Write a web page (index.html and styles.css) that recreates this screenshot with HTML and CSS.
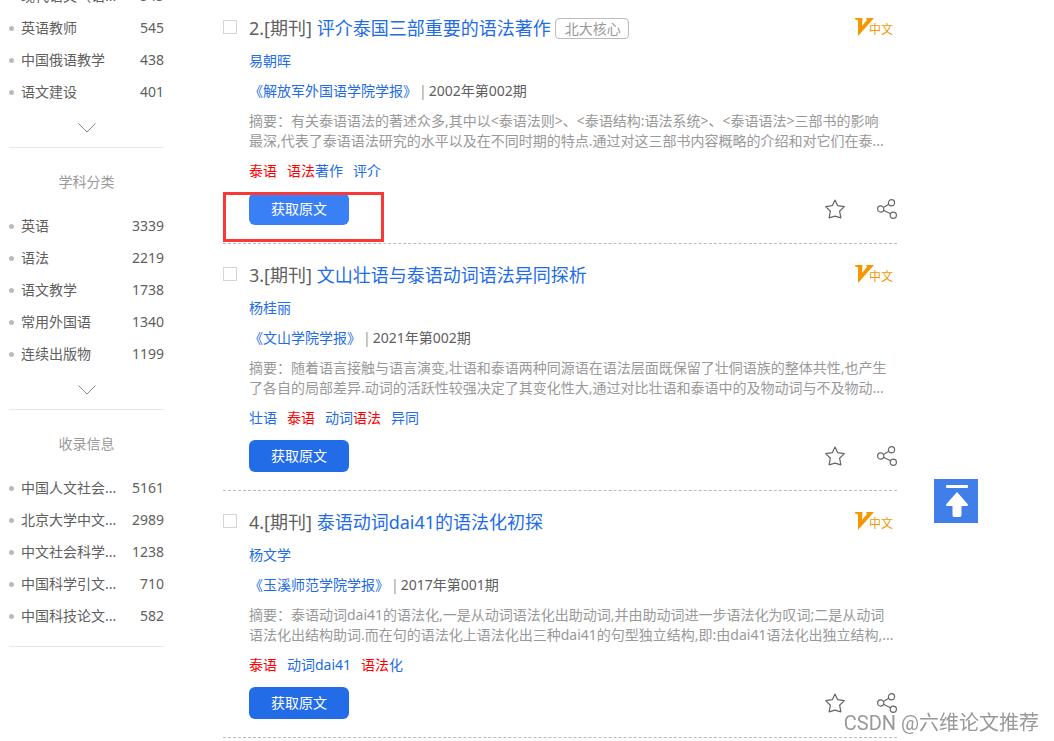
FILE: index.html
```html
<!DOCTYPE html>
<html lang="zh-CN">
<head>
    <meta charset="UTF-8">
    <title>文献检索结果</title>
    <link rel="stylesheet" href="styles.css">
</head>
<body>
<svg class="sprite" aria-hidden="true">
    <symbol id="down" viewBox="0 0 18 10"><path d="M.5.5 9 9 17.5.5"/></symbol>
    <symbol id="star" viewBox="0 0 20 20"><path d="M10 1 12.7 6.7 19.3 7.6 14.6 12.2 15.9 18.9 10 17.1 4.1 18.9 5.4 12.2.7 7.6 7.3 6.7Z"/></symbol>
    <symbol id="share" viewBox="0 0 20 20"><circle cx="3.7" cy="10" r="3.1"/><circle cx="14.5" cy="3.8" r="3.1"/><circle cx="16.3" cy="16.2" r="3.1"/><path d="m6.4 8.5 5.4-3.2M6.5 11.3l7 3.5"/></symbol>
    <symbol id="logo" viewBox="0 0 19 18"><path d="M0 0H7.500L7 8 12 2 11 0H19L3 18V2.500L0 1.200Z"/></symbol>
</svg>
<div class="page">
    <aside class="sidebar">
        <section class="facet">
            <ul>
                <li><a href="#">现代语文（语...</a><span>545</span></li>
                <li><a href="#">英语教师</a><span>545</span></li>
                <li><a href="#">中国俄语教学</a><span>438</span></li>
                <li><a href="#">语文建设</a><span>401</span></li>
            </ul>
            <button class="more" type="button" aria-label="展开"><svg><use href="#down"/></svg></button>
        </section>
        <section class="facet">
            <h3>学科分类</h3>
            <ul>
                <li><a href="#">英语</a><span>3339</span></li>
                <li><a href="#">语法</a><span>2219</span></li>
                <li><a href="#">语文教学</a><span>1738</span></li>
                <li><a href="#">常用外国语</a><span>1340</span></li>
                <li><a href="#">连续出版物</a><span>1199</span></li>
            </ul>
            <button class="more" type="button" aria-label="展开"><svg><use href="#down"/></svg></button>
        </section>
        <section class="facet last">
            <h3>收录信息</h3>
            <ul>
                <li><a href="#">中国人文社会...</a><span>5161</span></li>
                <li><a href="#">北京大学中文...</a><span>2989</span></li>
                <li><a href="#">中文社会科学...</a><span>1238</span></li>
                <li><a href="#">中国科学引文...</a><span>710</span></li>
                <li><a href="#">中国科技论文...</a><span>582</span></li>
            </ul>
        </section>
    </aside>
    <main class="results">
        <article class="item">
            <input class="check" type="checkbox" aria-label="选择第2条">
            <div class="content">
                <div class="head">
                    <h2>2.[期刊] <a href="#">评介泰国三部重要的语法著作</a></h2>
                    <span class="core">北大核心</span>
                    <span class="source"><svg><use href="#logo"/></svg>中文</span>
                </div>
                <p class="line"><a href="#">易朝晖</a></p>
                <p class="line"><a href="#">《解放军外国语学院学报》</a><i>|</i>2002年第002期</p>
                <p class="abstract">摘要：有关泰语语法的著述众多,其中以&lt;泰语法则&gt;、&lt;泰语结构:语法系统&gt;、&lt;泰语语法&gt;三部书的影响<br>最深,代表了泰语语法研究的水平以及在不同时期的特点.通过对这三部书内容概略的介绍和对它们在泰...</p>
                <p class="keys"><a href="#"><em>泰语</em></a><a href="#"><em>语法</em>著作</a><a href="#">评介</a></p>
                <div class="foot marked">
                    <button class="get active" type="button">获取原文</button>
                    <button class="tool" type="button" aria-label="收藏"><svg><use href="#star"/></svg></button>
                    <button class="tool" type="button" aria-label="分享"><svg><use href="#share"/></svg></button>
                </div>
            </div>
        </article>
        <article class="item">
            <input class="check" type="checkbox" aria-label="选择第3条">
            <div class="content">
                <div class="head">
                    <h2>3.[期刊] <a href="#">文山壮语与泰语动词语法异同探析</a></h2>
                    <span class="source"><svg><use href="#logo"/></svg>中文</span>
                </div>
                <p class="line"><a href="#">杨桂丽</a></p>
                <p class="line"><a href="#">《文山学院学报》</a><i>|</i>2021年第002期</p>
                <p class="abstract">摘要：随着语言接触与语言演变,壮语和泰语两种同源语在语法层面既保留了壮侗语族的整体共性,也产生<br>了各自的局部差异.动词的活跃性较强决定了其变化性大,通过对比壮语和泰语中的及物动词与不及物动...</p>
                <p class="keys"><a href="#">壮语</a><a href="#"><em>泰语</em></a><a href="#">动词<em>语法</em></a><a href="#">异同</a></p>
                <div class="foot">
                    <button class="get" type="button">获取原文</button>
                    <button class="tool" type="button" aria-label="收藏"><svg><use href="#star"/></svg></button>
                    <button class="tool" type="button" aria-label="分享"><svg><use href="#share"/></svg></button>
                </div>
            </div>
        </article>
        <article class="item">
            <input class="check" type="checkbox" aria-label="选择第4条">
            <div class="content">
                <div class="head">
                    <h2>4.[期刊] <a href="#">泰语动词dai41的语法化初探</a></h2>
                    <span class="source"><svg><use href="#logo"/></svg>中文</span>
                </div>
                <p class="line"><a href="#">杨文学</a></p>
                <p class="line"><a href="#">《玉溪师范学院学报》</a><i>|</i>2017年第001期</p>
                <p class="abstract">摘要：泰语动词dai41的语法化,一是从动词语法化出助动词,并由助动词进一步语法化为叹词;二是从动词<br>语法化出结构助词.而在句的语法化上语法化出三种dai41的句型独立结构,即:由dai41语法化出独立结构,...</p>
                <p class="keys"><a href="#"><em>泰语</em></a><a href="#">动词dai41</a><a href="#"><em>语法</em>化</a></p>
                <div class="foot">
                    <button class="get" type="button">获取原文</button>
                    <button class="tool" type="button" aria-label="收藏"><svg><use href="#star"/></svg></button>
                    <button class="tool" type="button" aria-label="分享"><svg><use href="#share"/></svg></button>
                </div>
            </div>
        </article>
    </main>
</div>
<button class="to-top" type="button" aria-label="返回顶部">
    <svg viewBox="0 0 44 44"><rect x="12" y="6" width="22" height="3" rx="1"/><path d="M23 13 34 25.500Q34 27 33 27H27.500V36Q27.500 38 26 38H20Q18.500 38 18.500 36V27H13Q12 27 12 25.500Z"/></svg>
</button>
<div class="watermark">CSDN @六维论文推荐</div>
</body>
</html>
```
FILE: styles.css
```css
*,
*::before,
*::after {
    box-sizing: border-box;
}

body {
    margin: 0;
    background: #fff;
    color: #606060;
    font-family: "Noto Sans", "Noto Sans CJK SC", sans-serif;
    font-size: 14px;
    line-height: 20px;
}

h2, h3, p, ul {
    margin: 0;
    padding: 0;
    font-weight: normal;
}

a {
    color: #226ce7;
    text-decoration: none;
}

button {
    padding: 0;
    border: 0;
    background: none;
    font: inherit;
    cursor: pointer;
}

svg {
    display: block;
}

.sprite {
    display: none;
}

.page {
    display: flex;
    gap: 59px;
    padding: 0 157px 0 9px;
}

/* 左侧分类 */
.sidebar {
    flex: 0 0 155px;
    margin-top: -20px;
}

.facet {
    border-bottom: 1px solid #e8e8e8;
}

.facet h3 {
    padding: 24px 0 18px;
    color: #999;
    font-size: 14px;
    text-align: center;
}

.facet li {
    display: flex;
    align-items: center;
    height: 32px;
    list-style: none;
}

.facet li::before {
    content: "";
    width: 5px;
    height: 5px;
    margin-right: 7px;
    border-radius: 50%;
    background: #bbb;
}

.facet li a {
    color: #606060;
    white-space: nowrap;
}

.facet li span {
    margin-left: auto;
}

.more {
    display: flex;
    justify-content: center;
    align-items: center;
    width: 100%;
    height: 39px;
}

.more svg {
    width: 18px;
    height: 10px;
    fill: none;
    stroke: #888;
}

.last {
    padding-bottom: 14px;
}

/* 检索结果 */
.results {
    flex: 1;
    min-width: 0;
}

.item {
    display: flex;
    gap: 12px;
    padding: 13px 0 18px;
    border-bottom: 1px dashed #bbb;
}

.item:first-child {
    padding-top: 10px;
}

.check {
    flex: none;
    appearance: none;
    width: 14px;
    height: 14px;
    margin: 10px 0 0;
    border: 1px solid #d5d5d5;
    background: #fff;
}

.content {
    flex: 1;
    min-width: 0;
}

.head {
    display: flex;
    align-items: center;
    height: 36px;
}

.head h2 {
    font-size: 18px;
    line-height: 36px;
}

.core {
    margin-left: 4px;
    padding: 0 7px 0 9px;
    border: 1px solid #bbb;
    border-radius: 4px;
    color: #999;
    line-height: 19px;
}

.source {
    display: flex;
    height: 20px;
    margin: 0 4px 0 auto;
    color: #f39800;
    font-size: 12px;
    line-height: 24px;
}

.source svg {
    width: 19px;
    height: 18px;
    margin-right: -5px;
    fill: #f39800;
}

.line {
    line-height: 30px;
}

.line i {
    margin: 0 2px;
    color: #999;
    font-style: normal;
}

.abstract {
    padding: 5px 0 10px;
    color: #999;
    white-space: nowrap;
}

.keys {
    display: flex;
    gap: 10px;
    padding-bottom: 12px;
}

.keys em {
    color: #f00;
    font-style: normal;
}

.foot {
    display: flex;
    align-items: center;
    gap: 32px;
}

.get {
    width: 100px;
    height: 32px;
    margin-right: auto;
    border-radius: 6px;
    background: #226ce7;
    color: #fff;
}

.get.active {
    background: #397ff5;
}

.tool svg {
    width: 20px;
    height: 20px;
    fill: none;
    stroke: #666;
    stroke-width: 1.2;
    stroke-linejoin: round;
}

/* 红框标注 */
.marked {
    position: relative;
}

.marked::after {
    content: "";
    position: absolute;
    top: -1px;
    left: -26px;
    width: 161px;
    height: 50px;
    border: 3px solid #fb3838;
    pointer-events: none;
}

.to-top {
    position: fixed;
    right: 76px;
    bottom: 218px;
    width: 44px;
    height: 44px;
    background: #407fea;
}

.to-top svg {
    fill: #fff;
}

.watermark {
    position: fixed;
    right: 15px;
    bottom: 3px;
    color: #999;
    font-family: Roboto, "Noto Sans CJK SC", sans-serif;
    font-size: 20px;
    line-height: 30px;
    text-shadow: 1px 1px 0 #fff;
}
```
